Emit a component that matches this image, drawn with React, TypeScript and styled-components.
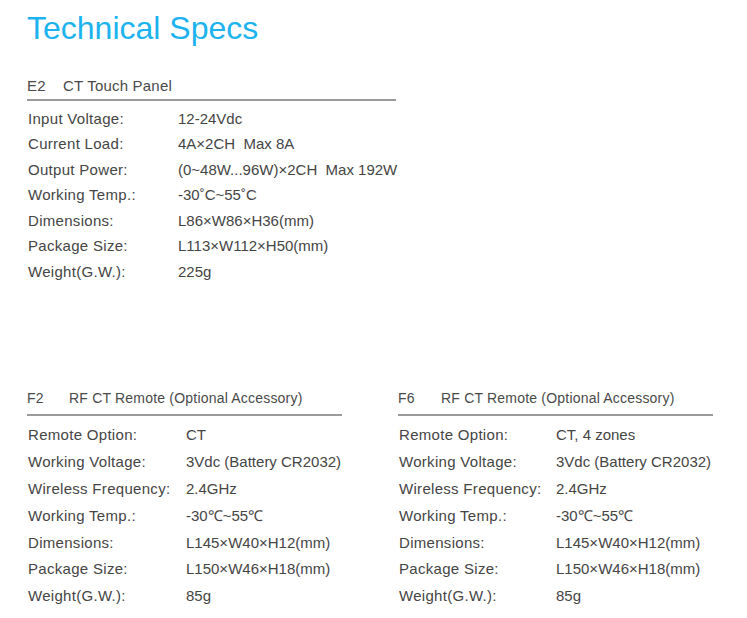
import React from "react";
import styled, { createGlobalStyle } from "styled-components";

const Global = createGlobalStyle`
  html, body { margin: 0; padding: 0; background: #ffffff; }
  body { font-family: "Liberation Sans", Arial, sans-serif; color: #454545; }
`;

const Page = styled.div`
  width: 747px;
  height: 618px;
  box-sizing: border-box;
  padding: 8px 0 0 27px;
  display: flex;
  flex-direction: column;
`;

const Title = styled.h1`
  margin: 0;
  font-family: "Liberation Sans", Arial, sans-serif;
  font-weight: 400;
  font-size: 32px;
  line-height: 40px;
  color: #1cb3ef;
`;

const Section = styled.section<{ $width: number; $top: number }>`
  width: ${(p) => p.$width}px;
  margin-top: ${(p) => p.$top}px;
  display: flex;
  flex-direction: column;
`;

const Header = styled.div<{ $pad: number; $size: number; $ls: number }>`
  display: flex;
  align-items: center;
  height: 20px;
  padding-bottom: ${(p) => p.$pad}px;
  border-bottom: 2px solid #9b9b9b;
  font-size: ${(p) => p.$size}px;
  color: #4a4a4a;
  letter-spacing: ${(p) => p.$ls}px;
`;

const Code = styled.span<{ $w: number }>`
  width: ${(p) => p.$w}px;
  flex: none;
`;

const Rows = styled.div<{ $top: number }>`
  margin-top: ${(p) => p.$top}px;
  padding-left: 1px;
  display: flex;
  flex-direction: column;
`;

const Row = styled.div<{ $h: number; $label: number }>`
  display: grid;
  grid-template-columns: ${(p) => p.$label}px auto;
  align-items: center;
  height: ${(p) => p.$h}px;
  font-size: 15px;
  color: #454545;
  white-space: nowrap;
`;

const Label = styled.span`
  letter-spacing: 0.3px;
`;

const Value = styled.span`
  letter-spacing: 0;
`;

const Pair = styled.div`
  display: flex;
  gap: 56px;
`;

type Spec = [string, string];

const e2: Spec[] = [
  ["Input Voltage:", "12-24Vdc"],
  ["Current Load:", "4A×2CH\u00a0\u00a0Max 8A"],
  ["Output Power:", "(0~48W...96W)×2CH\u00a0\u00a0Max 192W"],
  ["Working Temp.:", "-30˚C~55˚C"],
  ["Dimensions:", "L86×W86×H36(mm)"],
  ["Package Size:", "L113×W112×H50(mm)"],
  ["Weight(G.W.):", "225g"],
];

const remote = (opt: string): Spec[] => [
  ["Remote Option:", opt],
  ["Working Voltage:", "3Vdc (Battery CR2032)"],
  ["Wireless Frequency:", "2.4GHz"],
  ["Working Temp.:", "-30℃~55℃"],
  ["Dimensions:", "L145×W40×H12(mm)"],
  ["Package Size:", "L150×W46×H18(mm)"],
  ["Weight(G.W.):", "85g"],
];

function SpecBlock(props: {
  code: string;
  codeW: number;
  name: string;
  width: number;
  top: number;
  pad: number;
  headSize: number;
  headLs: number;
  rowsTop: number;
  rowH: number;
  labelW: number;
  specs: Spec[];
}) {
  return (
    <Section $width={props.width} $top={props.top}>
      <Header $pad={props.pad} $size={props.headSize} $ls={props.headLs}>
        <Code $w={props.codeW}>{props.code}</Code>
        <span>{props.name}</span>
      </Header>
      <Rows $top={props.rowsTop}>
        {props.specs.map(([l, v]) => (
          <Row key={l} $h={props.rowH} $label={props.labelW}>
            <Label>{l}</Label>
            <Value>{v}</Value>
          </Row>
        ))}
      </Rows>
    </Section>
  );
}

export default function App() {
  return (
    <>
      <Global />
      <Page>
        <Title>Technical Specs</Title>
        <SpecBlock
          code="E2"
          codeW={36}
          name="CT Touch Panel"
          width={369}
          top={27}
          pad={4}
          headSize={15}
          headLs={0.2}
          rowsTop={4.5}
          rowH={25.5}
          labelW={150}
          specs={e2}
        />
        <Pair>
          <SpecBlock
            code="F2"
            codeW={42}
            name="RF CT Remote (Optional Accessory)"
            width={315}
            top={104}
            pad={6}
            headSize={14}
            headLs={0.2}
            rowsTop={5.6}
            rowH={26.8}
            labelW={158}
            specs={remote("CT")}
          />
          <SpecBlock
            code="F6"
            codeW={43}
            name="RF CT Remote (Optional Accessory)"
            width={315}
            top={104}
            pad={6}
            headSize={14}
            headLs={0.2}
            rowsTop={5.6}
            rowH={26.8}
            labelW={157}
            specs={remote("CT, 4 zones")}
          />
        </Pair>
      </Page>
    </>
  );
}
